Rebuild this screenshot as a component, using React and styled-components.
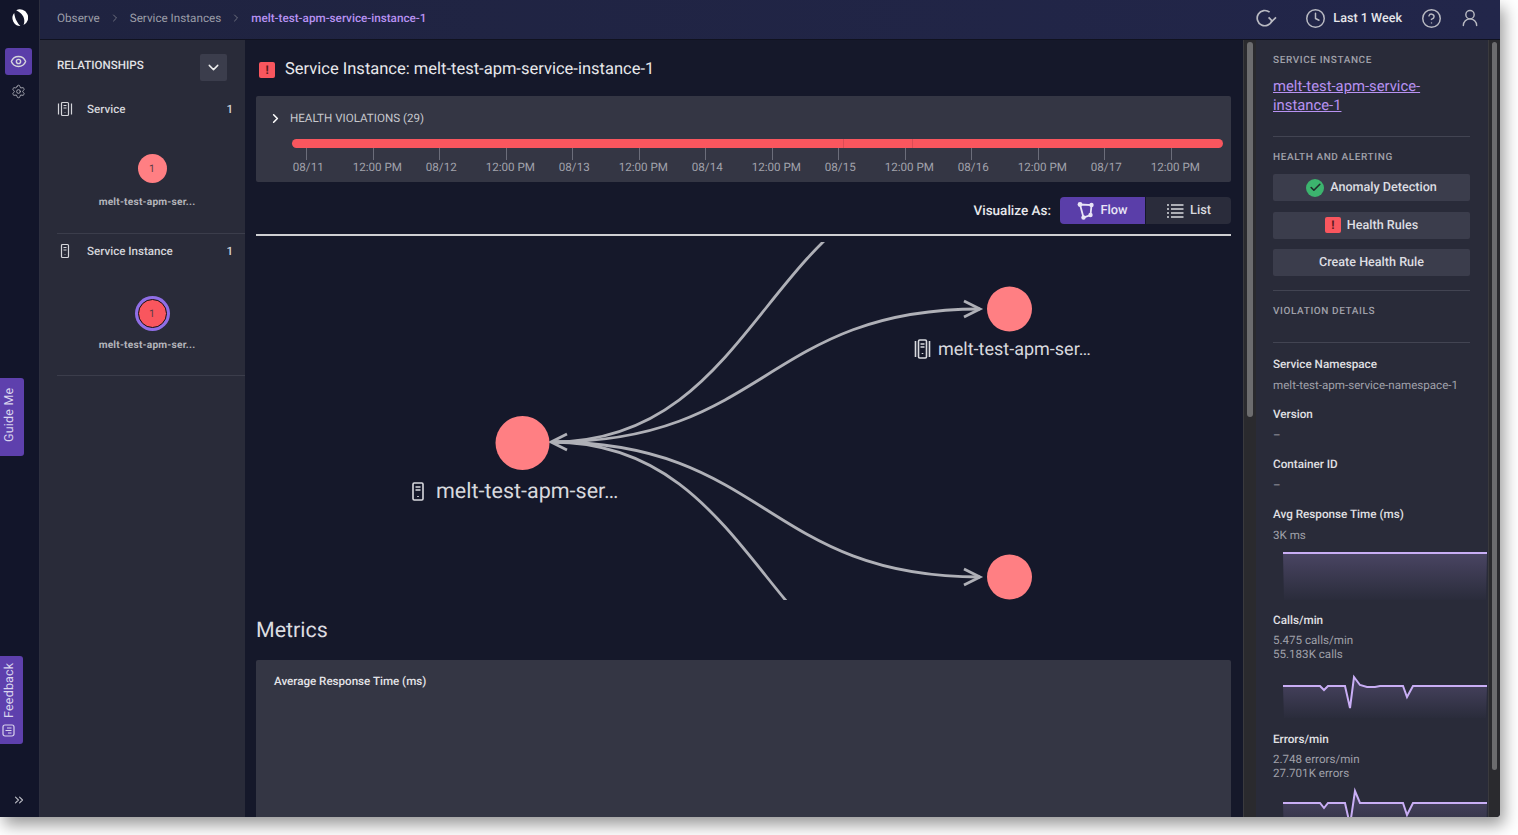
import React from 'react';
import styled, { createGlobalStyle } from 'styled-components';
import { Eye, Settings, ChevronsRight, ChevronRight, ChevronDown, Clock, CircleHelp, UserRound, Check } from 'lucide-react';

const GlobalStyle = createGlobalStyle`
    html, body { margin: 0; padding: 0; background: #fff; }
    body {
        font-family: Roboto, "Liberation Sans", sans-serif;
        width: 1518px;
        height: 835px;
        overflow: hidden;
        text-rendering: geometricPrecision;
    }
    * { box-sizing: border-box; }
`;

const Frame = styled.div`
    position: relative;
    width: 1500px;
    height: 817px;
    display: flex;
    overflow: hidden;
    background: #15182a;
    border-bottom-right-radius: 4px;
    box-shadow: 4px 8px 16px rgba(0, 0, 0, 0.4);
`;

const Rail = styled.nav`
    width: 40px;
    flex: none;
    display: flex;
    flex-direction: column;
    align-items: center;
    background: #12152a;
    border-right: 1px solid #2c2e3e;
    padding: 8px 2px 0 0;
`;

const LogoBox = styled.div`
    height: 40px;
    padding-top: 1px;
`;

const RailButton = styled.button`
    width: 27px;
    height: 27px;
    border: 0;
    padding: 0;
    border-radius: 3px;
    display: grid;
    place-items: center;
    color: #d6d6dc;
    background: ${p => (p.$active ? '#5a3ea9' : 'transparent')};
    margin-bottom: 3px;
`;

const RailFoot = styled.div`
    margin-top: auto;
    padding-bottom: 10px;
    color: #b9bac2;
    display: flex;
`;

const SideTab = styled.div`
    position: absolute;
    left: 0;
    top: ${p => p.$top}px;
    width: ${p => p.$w}px;
    height: ${p => p.$h}px;
    padding: ${p => p.$lift || 0}px 0 0 5px;
    background: #5e40ad;
    color: #d9d4ee;
    border-radius: 3px 0 0 3px;
    font-size: 12.5px;
    writing-mode: vertical-rl;
    transform: rotate(180deg);
    display: flex;
    align-items: center;
    justify-content: center;
    gap: 6px;
    letter-spacing: 0.2px;
`;

const Body = styled.div`
    flex: 1;
    min-width: 0;
    display: flex;
    flex-direction: column;
`;

const TopBar = styled.header`
    height: 39px;
    flex: none;
    display: flex;
    align-items: center;
    padding: 0 20px 3px 17px;
    background: linear-gradient(90deg, #1f2340, #22264a);
    font-size: 11.7px;
    color: #9b9da8;
`;

const Crumb = styled.span`
    color: ${p => (p.$current ? '#b892f2' : '#9b9da8')};
    font-weight: ${p => (p.$current ? 500 : 400)};
`;

const CrumbSep = styled.span`
    display: flex;
    width: 30px;
    justify-content: center;
    color: #6f7180;
`;

const TopActions = styled.div`
    margin-left: auto;
    display: flex;
    align-items: center;
    color: #b9bac2;
`;

const RangeLabel = styled.span`
    color: #e6e6ea;
    font-size: 12.6px;
    font-weight: 500;
    margin: 0 19px 0 7px;
`;

const Columns = styled.div`
    flex: 1;
    min-height: 0;
    display: flex;
    border-top: 1px solid #101220;
`;

const RelPanel = styled.aside`
    width: 205px;
    flex: none;
    background: #292b39;
    padding: 14px 0 0 17px;
`;

const RelHead = styled.div`
    height: 27px;
    display: flex;
    justify-content: space-between;
    padding-right: 18px;
    font-size: 11.6px;
    font-weight: 500;
    color: #e2e2e6;
    line-height: 23px;
`;

const SquareButton = styled.button`
    width: 27px;
    height: 27px;
    border: 0;
    padding: 0;
    border-radius: 2px;
    background: #3b3d4c;
    color: #eee;
    display: grid;
    place-items: center;
`;

const RelGroup = styled.section`
    height: ${p => p.$h}px;
    border-bottom: ${p => (p.$rule ? '1px solid #3b3d4b' : '0')};
    padding-top: ${p => p.$pad}px;
`;

const RelRow = styled.div`
    display: flex;
    align-items: center;
    height: 20px;
    padding-right: 12px;
    font-size: 11.6px;
    font-weight: 500;
    color: #d4d5da;
    svg { width: 16px; margin-right: 14px; color: #d4d5da; }
    b { margin-left: auto; font-weight: 500; }
`;

const RelNode = styled.div`
    display: flex;
    flex-direction: column;
    align-items: center;
    width: 180px;
    margin-top: ${p => p.$top}px;
`;

const NodeBadge = styled.div`
    width: 29px;
    height: 29px;
    border-radius: 50%;
    margin-left: 10px;
    display: grid;
    place-items: center;
    font-size: 10.5px;
    color: #5c3b44;
    background: ${p => (p.$selected ? '#f9565e' : '#ff7f83')};
    ${p => p.$selected && `
        border: 1.5px solid #111;
        box-shadow: 0 0 0 3px #8f6ee6;
    `}
`;

const NodeName = styled.div`
    font-size: 10.2px;
    font-weight: 700;
    color: #b4b5bb;
    margin-top: ${p => p.$top}px;
    letter-spacing: 0.2px;
`;

const Main = styled.main`
    width: 998px;
    flex: none;
    display: flex;
    flex-direction: column;
    padding: 0 12px 0 11px;
    overflow: hidden;
`;

const TitleRow = styled.div`
    height: 56px;
    flex: none;
    display: flex;
    align-items: center;
    gap: 10px;
    padding: 3px 0 0 3px;
    font-size: 16.5px;
    color: #e8e8ec;
`;

const AlertIcon = styled.span`
    width: ${p => p.$size}px;
    height: ${p => p.$size}px;
    flex: none;
    border-radius: 2px;
    background: #f9565e;
    color: #5a1a20;
    font-weight: 700;
    font-size: ${p => p.$size - 4}px;
    line-height: ${p => p.$size}px;
    text-align: center;
`;

const HealthCard = styled.section`
    height: 86px;
    flex: none;
    background: #343644;
    border-radius: 2px;
    padding: 14px 8px 0 13px;
`;

const HealthHead = styled.div`
    display: flex;
    align-items: center;
    gap: 7px;
    height: 16px;
    font-size: 11.6px;
    color: #c6c7cd;
    svg { color: #fff; margin-left: -1px; }
`;

const ViolationBar = styled.div`
    height: 9px;
    margin: 13px 0 0 23px;
    border-radius: 5px;
    overflow: hidden;
    display: flex;
    background: #f9565e;
`;

const BarSegment = styled.div`
    flex: ${p => p.$span};
    & + & { border-left: 1px solid #dc4c55; }
`;

const Ticks = styled.div`
    display: flex;
    margin-left: 4.5px;
`;

const Tick = styled.div`
    width: 66.5px;
    flex: none;
    display: flex;
    flex-direction: column;
    align-items: center;
    font-size: 11.6px;
    color: #a2a3ac;
    white-space: nowrap;
    i { width: 1px; height: 12px; background: #6b6d7a; }
    span { padding-left: ${p => (p.$time ? 8 : 3)}px; line-height: 14px; }
`;

const VizRow = styled.div`
    height: 27px;
    flex: none;
    margin-top: 15px;
    display: flex;
    align-items: center;
    justify-content: flex-end;
`;

const VizLabel = styled.span`
    font-size: 13.5px;
    font-weight: 500;
    color: #e8e8ec;
    margin-right: 9px;
`;

const VizButton = styled.div`
    width: 85px;
    height: 27px;
    display: flex;
    align-items: center;
    justify-content: center;
    gap: 5px;
    font-size: 12.8px;
    font-weight: 500;
    color: ${p => (p.$active ? '#e8e4f6' : '#d8d9de')};
    background: ${p => (p.$active ? '#5a3ea9' : '#2a2c3b')};
    border-radius: ${p => (p.$active ? '4px 0 0 4px' : '0 4px 4px 0')};
    margin-left: ${p => (p.$active ? 0 : 1)}px;
`;

const Rule = styled.div`
    height: 2px;
    flex: none;
    margin-top: 10px;
    background: #cfcfd2;
`;

const Graph = styled.svg`
    display: block;
    flex: none;
    width: 975px;
    height: 358px;
    margin-top: 6px;
    overflow: hidden;
`;

const Edge = styled.path`
    fill: none;
    stroke: #afb0b7;
    stroke-width: 2.8;
`;

const GraphLabel = styled.text`
    fill: #d8d9de;
    font-size: ${p => p.$size}px;
    font-family: Roboto, sans-serif;
`;

const GraphIcon = styled.g`
    fill: none;
    stroke: #d8d9de;
    stroke-width: 1.6;
`;

const MetricsTitle = styled.h2`
    height: 60px;
    flex: none;
    margin: 0;
    font-size: 21.4px;
    font-weight: 400;
    line-height: 61px;
    color: #dcdce0;
`;

const MetricCard = styled.section`
    flex: 1;
    background: #343644;
    border-radius: 2px 2px 0 0;
    padding: 14px 18px;
    font-size: 11.6px;
    font-weight: 500;
    color: #e4e4e8;
`;

const Track = styled.div`
    width: ${p => p.$w}px;
    flex: none;
    background: #2a2a2e;
    padding: 2px ${p => p.$side}px 0;
    border-left: 1px solid #3a3a3e;
`;

const Thumb = styled.div`
    height: ${p => p.$h}px;
    border-radius: 4px;
    background: #6c6c6e;
`;

const Detail = styled.aside`
    width: 232px;
    flex: none;
    background: #292b39;
    padding: 15px 18px 0 17px;
    overflow: hidden;
`;

const Eyebrow = styled.div`
    font-size: 10px;
    font-weight: 500;
    letter-spacing: 0.6px;
    line-height: 12px;
    color: #a0a1aa;
`;

const InstanceLink = styled.a`
    display: block;
    margin-top: 10px;
    font-size: 14.8px;
    line-height: 19px;
    color: #b892f2;
    text-decoration: underline;
`;

const Divider = styled.div`
    height: 1px;
    background: #424452;
    margin: ${p => p.$top}px 0 ${p => p.$bottom}px;
`;

const ActionButton = styled.button`
    width: 100%;
    height: 27px;
    border: 0;
    padding: 0;
    margin-top: ${p => p.$top}px;
    display: flex;
    align-items: center;
    justify-content: center;
    gap: 6px;
    background: #3b3d4c;
    border-radius: 2px;
    font-family: inherit;
    font-size: 12.6px;
    font-weight: 500;
    color: #dddee2;
    text-rendering: inherit;
`;

const OkIcon = styled.span`
    width: 18px;
    height: 18px;
    border-radius: 50%;
    background: #3cb46e;
    color: #1f2a2a;
    display: grid;
    place-items: center;
`;

const Field = styled.div`
    margin-top: ${p => p.$top}px;
`;

const FieldName = styled.div`
    font-size: 11.7px;
    font-weight: 500;
    line-height: 15px;
    color: #e0e0e4;
`;

const FieldValue = styled.div`
    margin-top: ${p => p.$gap || 6}px;
    font-size: 11.6px;
    line-height: 14px;
    color: #a0a1aa;
    white-space: nowrap;
`;

const Spark = styled.svg`
    display: block;
    width: 205px;
    height: ${p => p.$h}px;
    margin: ${p => p.$top}px 0 0 10px;
    overflow: hidden;
`;

const ServiceIcon = () => (
    <svg width="16" height="16" viewBox="0 0 16 16" fill="none" stroke="currentColor" strokeWidth="1.2">
        <path d="M1.5 2.5v11M14.5 2.5v11" />
        <rect x="4.5" y="1.5" width="7" height="13" rx="1" />
        <path d="M6.5 4.5h3M6.5 7h3M8 11.5v.5" />
    </svg>
);

const InstanceIcon = () => (
    <svg width="16" height="16" viewBox="0 0 16 16" fill="none" stroke="currentColor" strokeWidth="1.2">
        <rect x="4.5" y="1.5" width="7" height="13" rx="1" />
        <path d="M6.5 4.5h3M6.5 7h3M8 11.5v.5" />
    </svg>
);

const Logo = () => (
    <svg width="18" height="18" viewBox="0 0 18 18" fill="#fff">
        <path d="M6.2 1.2A8.2 8.2 0 0 1 13.6 16C15.2 12 14.8 5.2 6.2 1.2z" />
        <path d="M4.2 4A8 8 0 0 0 10.4 17C8 14.6 5 10.6 4.2 4z" />
    </svg>
);

const RefreshIcon = () => (
    <svg width="21" height="21" viewBox="0 0 21 21" fill="none" stroke="currentColor" strokeWidth="1.7" style={{ marginRight: 28 }}>
        <path d="M13.6 4.2A7.6 7.6 0 1 0 16 12.6" />
        <path d="M12.6 9.4L16.2 13 20 9.4" />
    </svg>
);

const FlowIcon = () => (
    <svg width="18" height="18" viewBox="0 0 18 18" fill="none" stroke="#e8e4f6" strokeWidth="1.8">
        <path d="M3 2.5L14.5 3 13.5 13 6.5 15.5z" />
        <g fill="#e8e4f6" stroke="none">
            <circle cx="3" cy="2.5" r="2.4" />
            <circle cx="14.5" cy="3" r="2.2" />
            <circle cx="13.5" cy="13" r="2.2" />
            <circle cx="6.5" cy="15.5" r="2.2" />
        </g>
    </svg>
);

const ListIcon = () => (
    <svg width="18" height="16" viewBox="0 0 18 16" fill="none" stroke="#d8d9de" strokeWidth="1.4" style={{ marginRight: 1 }}>
        <path d="M1 2h2M5 2h12.5M1 6h2M5 6h12.5M1 10h2M5 10h12.5M1 14h2M5 14h12.5" />
    </svg>
);

const FeedbackIcon = () => (
    <svg width="13" height="13" viewBox="0 0 13 13" fill="none" stroke="currentColor" strokeWidth="1.2" style={{ transform: 'rotate(90deg)' }}>
        <rect x="1" y="1" width="11" height="11" rx="2" />
        <path d="M4 9.5V6M6.5 9.5V3.5M9 9.5V5" />
    </svg>
);

const dates = ['08/11', '08/12', '08/13', '08/14', '08/15', '08/16', '08/17'];

// the chart line of a sparkline, with the fill closed under it
const Sparkline = ({ id, line, height, top }) => (
    <Spark viewBox={`0 0 205 ${height}`} $h={height} $top={top}>
        <defs>
            <linearGradient id={id} x1="0" y1="0" x2="0" y2="1">
                <stop offset="0" stopColor="#4a4563" />
                <stop offset="1" stopColor="#2a2c3b" />
            </linearGradient>
        </defs>
        <path d={`${line} L203 ${height} L1 ${height} Z`} fill={`url(#${id})`} />
        <path d={line} fill="none" stroke="#c9aef5" strokeWidth="2" />
    </Spark>
);

const Sigmoid = ({ target }) => <Edge d={`M552 442 C766 442 766 ${target} 980 ${target}`} />;

const Arrow = ({ x, y, dir }) => <Edge d={`M${x + dir * 16} ${y - 8} L${x} ${y} L${x + dir * 16} ${y + 8}`} />;

function App() {
    return (
        <Frame>
            <GlobalStyle />
            <Rail>
                <LogoBox><Logo /></LogoBox>
                <RailButton $active><Eye size={17} /></RailButton>
                <RailButton><Settings size={15} strokeWidth={1.5} color="#a9aab3" /></RailButton>
                <RailFoot><ChevronsRight size={14} /></RailFoot>
            </Rail>
            <SideTab $top={378} $w={24} $h={78} $lift={4}>Guide Me</SideTab>
            <SideTab $top={656} $w={23} $h={88}><FeedbackIcon />Feedback</SideTab>
            <Body>
                <TopBar>
                    <Crumb>Observe</Crumb>
                    <CrumbSep><ChevronRight size={12} /></CrumbSep>
                    <Crumb>Service Instances</Crumb>
                    <CrumbSep><ChevronRight size={12} /></CrumbSep>
                    <Crumb $current>melt-test-apm-service-instance-1</Crumb>
                    <TopActions>
                        <RefreshIcon />
                        <Clock size={21} strokeWidth={1.7} />
                        <RangeLabel>Last 1 Week</RangeLabel>
                        <CircleHelp size={21} strokeWidth={1.7} style={{ marginRight: 18 }} />
                        <UserRound size={20} strokeWidth={1.7} />
                    </TopActions>
                </TopBar>
                <Columns>
                    <RelPanel>
                        <RelHead>
                            RELATIONSHIPS
                            <SquareButton><ChevronDown size={17} /></SquareButton>
                        </RelHead>
                        <RelGroup $h={153} $rule $pad={18}>
                            <RelRow><ServiceIcon />Service<b>1</b></RelRow>
                            <RelNode $top={35}>
                                <NodeBadge>1</NodeBadge>
                                <NodeName $top={14}>melt-test-apm-ser...</NodeName>
                            </RelNode>
                        </RelGroup>
                        <RelGroup $h={142} $rule $pad={7}>
                            <RelRow><InstanceIcon />Service Instance<b>1</b></RelRow>
                            <RelNode $top={38}>
                                <NodeBadge $selected>1</NodeBadge>
                                <NodeName $top={12}>melt-test-apm-ser...</NodeName>
                            </RelNode>
                        </RelGroup>
                    </RelPanel>
                    <Main>
                        <TitleRow>
                            <AlertIcon $size={16}>!</AlertIcon>
                            Service Instance: melt-test-apm-service-instance-1
                        </TitleRow>
                        <HealthCard>
                            <HealthHead>
                                <ChevronRight size={15} strokeWidth={2.5} />
                                HEALTH VIOLATIONS (29)
                            </HealthHead>
                            <ViolationBar>
                                <BarSegment $span={552} />
                                <BarSegment $span={68} />
                                <BarSegment $span={311} />
                            </ViolationBar>
                            <Ticks>
                                {dates.map(d => (
                                    <React.Fragment key={d}>
                                        <Tick><i /><span>{d}</span></Tick>
                                        <Tick $time><i /><span>12:00 PM</span></Tick>
                                    </React.Fragment>
                                ))}
                            </Ticks>
                        </HealthCard>
                        <VizRow>
                            <VizLabel>Visualize As:</VizLabel>
                            <VizButton $active><FlowIcon />Flow</VizButton>
                            <VizButton><ListIcon />List</VizButton>
                        </VizRow>
                        <Rule />
                        <Graph viewBox="256 242 975 358">
                            <Sigmoid target={174} />
                            <Sigmoid target={309} />
                            <Sigmoid target={577} />
                            <Sigmoid target={710} />
                            <Arrow x={551} y={442} dir={1} />
                            <Arrow x={980} y={309} dir={-1} />
                            <Arrow x={980} y={577} dir={-1} />
                            <circle cx="522.5" cy="443" r="27" fill="#ff7f83" />
                            <circle cx="1009.5" cy="309" r="22.5" fill="#ff7f83" />
                            <circle cx="1009.5" cy="577" r="22.5" fill="#ff7f83" />
                            <GraphIcon>
                                <rect x="413" y="483" width="10" height="17" rx="1.2" />
                                <path d="M415.5 487h5M415.5 490h5M418 496v1" />
                                <path d="M915.5 341v16M929.5 341v16" />
                                <rect x="918.5" y="340" width="8" height="18" rx="1.2" />
                                <path d="M920.5 344h4M920.5 347h4M922.5 353v1" />
                            </GraphIcon>
                            <GraphLabel x="436" y="498" $size={21.5}>melt-test-apm-ser…</GraphLabel>
                            <GraphLabel x="938" y="355" $size={18}>melt-test-apm-ser…</GraphLabel>
                        </Graph>
                        <MetricsTitle>Metrics</MetricsTitle>
                        <MetricCard>Average Response Time (ms)</MetricCard>
                    </Main>
                    <Track $w={13} $side={3}><Thumb $h={375} /></Track>
                    <Detail>
                        <Eyebrow>SERVICE INSTANCE</Eyebrow>
                        <InstanceLink>melt-test-apm-service-instance-1</InstanceLink>
                        <Divider $top={21} $bottom={15} />
                        <Eyebrow>HEALTH AND ALERTING</Eyebrow>
                        <ActionButton $top={10}>
                            <OkIcon><Check size={13} strokeWidth={3} /></OkIcon>
                            Anomaly Detection
                        </ActionButton>
                        <ActionButton $top={10.5}>
                            <AlertIcon $size={16}>!</AlertIcon>
                            Health Rules
                        </ActionButton>
                        <ActionButton $top={10.5}>Create Health Rule</ActionButton>
                        <Divider $top={14} $bottom={15} />
                        <Eyebrow>VIOLATION DETAILS</Eyebrow>
                        <Divider $top={24} $bottom={14} />
                        <Field>
                            <FieldName>Service Namespace</FieldName>
                            <FieldValue>melt-test-apm-service-namespace-1</FieldValue>
                        </Field>
                        <Field $top={15}>
                            <FieldName>Version</FieldName>
                            <FieldValue>–</FieldValue>
                        </Field>
                        <Field $top={15}>
                            <FieldName>Container ID</FieldName>
                            <FieldValue>–</FieldValue>
                        </Field>
                        <Field $top={15}>
                            <FieldName>Avg Response Time (ms)</FieldName>
                            <FieldValue>3K ms</FieldValue>
                        </Field>
                        <Sparkline id="avg" top={8} height={50} line="M0 3 L204 3" />
                        <Field $top={13}>
                            <FieldName>Calls/min</FieldName>
                            <FieldValue $gap={5}>5.475 calls/min<br />55.183K calls</FieldValue>
                        </Field>
                        <Sparkline id="calls" top={3} height={54} line="M0 22 L37 22 L41 26 L45 22 L62 22 L67 44 L71 13 L77 21 L84 23 L92 23 L97 22 L120 22 L124 33 L130 22 L204 22" />
                        <Field $top={14}>
                            <FieldName>Errors/min</FieldName>
                            <FieldValue $gap={5}>2.748 errors/min<br />27.701K errors</FieldValue>
                        </Field>
                        <Sparkline id="errors" top={4} height={54} line="M0 19 L37 19 L41 24 L45 19 L62 19 L67 41 L72 7 L77 19 L120 19 L124 31 L130 19 L204 19" />
                    </Detail>
                    <Track $w={12} $side={3}><Thumb $h={728} /></Track>
                </Columns>
            </Body>
        </Frame>
    );
}

export default App;
